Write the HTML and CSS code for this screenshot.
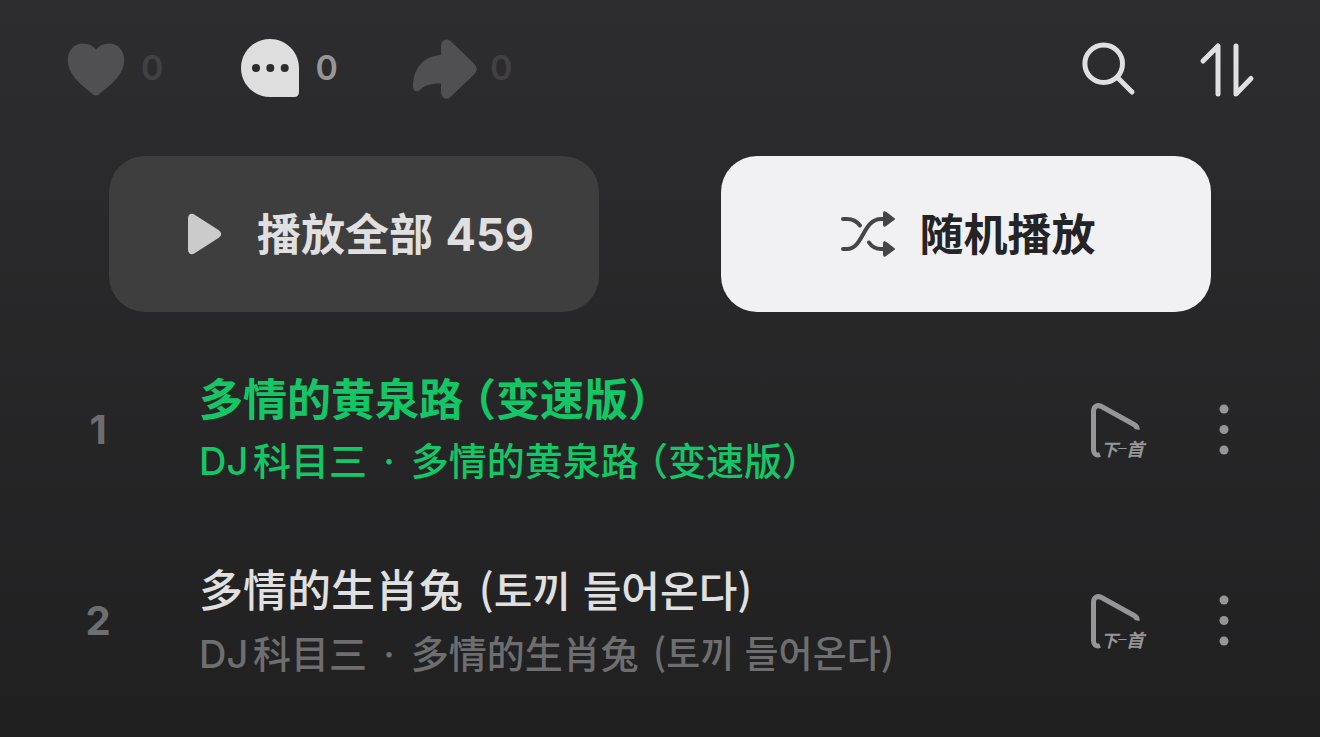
FILE: index.html
```html
<!DOCTYPE html>
<html lang="zh-CN">
<head>
    <meta charset="UTF-8">
    <meta name="viewport" content="width=device-width, initial-scale=1.0">
    <title>播放列表</title>
    <link rel="stylesheet" href="styles.css">
</head>
<body>
<header class="toolbar">
    <div class="stats">
        <button class="stat" aria-label="喜欢">
            <svg width="64" height="64" viewBox="0 0 64 64" fill="#505052">
                <path d="M32 59.500C30.500 59.500 29.500 58.700 28 57.400C19 50 3.800 39.500 3.800 24C3.800 14 10.500 7.500 19 7.500C24.500 7.500 29 9.500 32 13.500C35.200 9.500 39.500 7.500 45 7.500C53.500 7.500 60.200 14 60.200 24C60.200 39.500 45 50 36 57.400C34.500 58.700 33.500 59.500 32 59.500Z"/>
            </svg>
            <span>0</span>
        </button>
        <button class="stat stat-active" aria-label="评论">
            <svg width="64" height="64" viewBox="0 0 64 64">
                <path fill="#dededf" d="M32 3C48 3 61 16 61 32V56Q61 61 56 61H32C16 61 3 48 3 32S16 3 32 3Z"/>
                <g fill="#2c2c2e"><circle cx="18" cy="32" r="4"/><circle cx="32.300" cy="32" r="4"/><circle cx="46.700" cy="32" r="4"/></g>
            </svg>
            <span>0</span>
        </button>
        <button class="stat" aria-label="分享">
            <svg width="64" height="64" viewBox="0 0 64 64" fill="#505052">
                <path d="M28 19V10C28 4 33.500 1.500 37.500 5L61 27.500Q66.500 33 61 38.500L37.500 61C33.500 64.500 28 62 28 56V47.500C19 47.500 12 49 8 53C4.500 57 0 55.500 0 50.500C0 32 11 20 28 19Z"/>
            </svg>
            <span>0</span>
        </button>
    </div>
    <div class="tools">
        <button aria-label="搜索">
            <svg width="60" height="60" viewBox="0 0 60 60" fill="none" stroke="#e0e0e1" stroke-width="5" stroke-linecap="round">
                <circle cx="25.700" cy="25.700" r="18.800"/>
                <path d="M40 40L54 54"/>
            </svg>
        </button>
        <button aria-label="排序">
            <svg width="60" height="60" viewBox="0 0 60 60" fill="none" stroke="#e0e0e1" stroke-width="5" stroke-linecap="round" stroke-linejoin="round">
                <path d="M7 23L22 8V56M40 8V56L55 40.500"/>
            </svg>
        </button>
    </div>
</header>

<div class="actions">
    <button class="action play-all">
        <svg width="56" height="56" viewBox="0 0 56 56" fill="#cbcbcc">
            <path d="M11 12.500C11 8 14.500 6.500 18 9L41.500 24Q47 28 41.500 32L18 47C14.500 49.500 11 48 11 43.500Z"/>
        </svg>
        <span class="label">播放全部 <span class="count">459</span></span>
    </button>
    <button class="action shuffle">
        <svg width="56" height="56" viewBox="0 0 56 56" fill="none" stroke="#454547" stroke-width="4" stroke-linecap="round">
            <path d="M3 13H7C12 13 17 15.500 20 19.500M3 43H7C23 43 23 13 41 13H44M29 36.500C32 41 36 43 41 43H44"/>
            <path fill="#454547" stroke-width="2" stroke-linejoin="round" d="M44 7.200V18.800Q44 20.500 45.500 19.200L54 13L45.500 6.500Q44 5.500 44 7.200ZM44 37.200V48.800Q44 50.500 45.500 49.200L54 43L45.500 36.500Q44 35.500 44 37.200Z"/>
        </svg>
        <span class="label">随机播放</span>
    </button>
</div>

<ol class="songs">
    <li class="song playing">
        <span class="index">1</span>
        <div class="info">
            <div class="title">多情的黄泉路 （变速版）</div>
            <div class="artist">DJ科目三 <span class="dot">·</span> 多情的黄泉路 （变速版）</div>
        </div>
        <button class="next" aria-label="下一首">
            <svg width="60" height="60" viewBox="0 0 60 60">
                <path fill="none" stroke="#969698" stroke-width="5" d="M12 54.500C8 56 5.500 53.500 5.500 49.500V11.500C5.500 6 9.500 4.500 13.500 6.500L46 24.500Q49.500 26.500 49 29.500"/>
                <g class="next-text" fill="#969698"><text x="13" y="56" font-size="17">下</text><text x="29" y="52" font-size="9">一</text><text x="38" y="56" font-size="18">首</text></g>
            </svg>
        </button>
        <button class="more" aria-label="更多">
            <svg width="12" height="60" viewBox="0 0 12 60" fill="#969698"><circle cx="6" cy="9" r="4.500"/><circle cx="6" cy="29.500" r="4.500"/><circle cx="6" cy="50" r="4.500"/></svg>
        </button>
    </li>
    <li class="song">
        <span class="index">2</span>
        <div class="info">
            <div class="title">多情的生肖兔 <span lang="ko">(토끼 들어온다)</span></div>
            <div class="artist">DJ科目三 <span class="dot">·</span> 多情的生肖兔 <span lang="ko">(토끼 들어온다)</span></div>
        </div>
        <button class="next" aria-label="下一首">
            <svg width="60" height="60" viewBox="0 0 60 60">
                <path fill="none" stroke="#969698" stroke-width="5" d="M12 54.500C8 56 5.500 53.500 5.500 49.500V11.500C5.500 6 9.500 4.500 13.500 6.500L46 24.500Q49.500 26.500 49 29.500"/>
                <g class="next-text" fill="#969698"><text x="13" y="56" font-size="17">下</text><text x="29" y="52" font-size="9">一</text><text x="38" y="56" font-size="18">首</text></g>
            </svg>
        </button>
        <button class="more" aria-label="更多">
            <svg width="12" height="60" viewBox="0 0 12 60" fill="#969698"><circle cx="6" cy="9" r="4.500"/><circle cx="6" cy="29.500" r="4.500"/><circle cx="6" cy="50" r="4.500"/></svg>
        </button>
    </li>
</ol>
</body>
</html>
```
FILE: styles.css
```css
* {
    box-sizing: border-box;
}
body {
    margin: 0;
    min-height: 100vh;
    background: linear-gradient(#2d2d2f, #202021);
    font-family: Inter, "Noto Sans CJK SC", sans-serif;
    color: #e0e0e1;
}
button {
    border: none;
    background: none;
    padding: 0;
    font-family: inherit;
    color: inherit;
    cursor: pointer;
}
svg {
    display: block;
    flex: none;
    overflow: visible;
}
.toolbar {
    display: flex;
    justify-content: space-between;
    align-items: center;
    padding: 36px 64px 0 64px;
}
.stats {
    display: flex;
    gap: 75px;
}
.stat {
    display: flex;
    align-items: center;
    gap: 13px;
    font-size: 34px;
    line-height: 64px;
    font-weight: 600;
    color: #414143;
}
.stat-active {
    color: #969698;
}
.tools {
    display: flex;
    gap: 58px;
}
.actions {
    display: flex;
    gap: 122px;
    padding: 56px 109px 0;
}
.action {
    flex: 1;
    display: flex;
    justify-content: center;
    align-items: center;
    gap: 24px;
    height: 156px;
    padding-left: 3px;
    border-radius: 36px;
    font-size: 44px;
    font-weight: 700;
}
.label {
    padding-bottom: 4px;
}
.count {
    margin-left: 2px;
    font-size: 45px;
}
.play-all {
    background: #3e3e3f;
}
.shuffle {
    background: #f1f1f3;
    color: #242426;
}
.songs {
    list-style: none;
    margin: 0;
    padding: 22px 90px 0 58px;
}
.song {
    display: flex;
    align-items: center;
    height: 191px;
}
.index {
    width: 80px;
    text-align: center;
    font-size: 40px;
    font-weight: 700;
    color: #6e6e70;
}
.info {
    flex: 1;
    min-width: 0;
    margin-left: 61px;
    white-space: nowrap;
    font-weight: 500;
    font-feature-settings: "halt";
    text-autospace: normal;
}
.title {
    font-size: 44px;
    line-height: 62px;
}
.artist {
    font-size: 38px;
    line-height: 60px;
    color: #6e6e70;
}
.dot {
    margin: 0 6px;
}
.info [lang="ko"] {
    margin-left: 4px;
    font-family: "Noto Sans CJK KR", sans-serif;
}
.title [lang="ko"] {
    font-size: 42px;
}
.artist [lang="ko"] {
    font-size: 37px;
}
.playing .title,
.playing .artist {
    color: #14c766;
}
.playing .title {
    font-weight: 600;
}
.next-text {
    font-family: "Noto Sans CJK SC", sans-serif;
    font-weight: 700;
    font-style: italic;
}
.more {
    margin-left: 70px;
}
```
